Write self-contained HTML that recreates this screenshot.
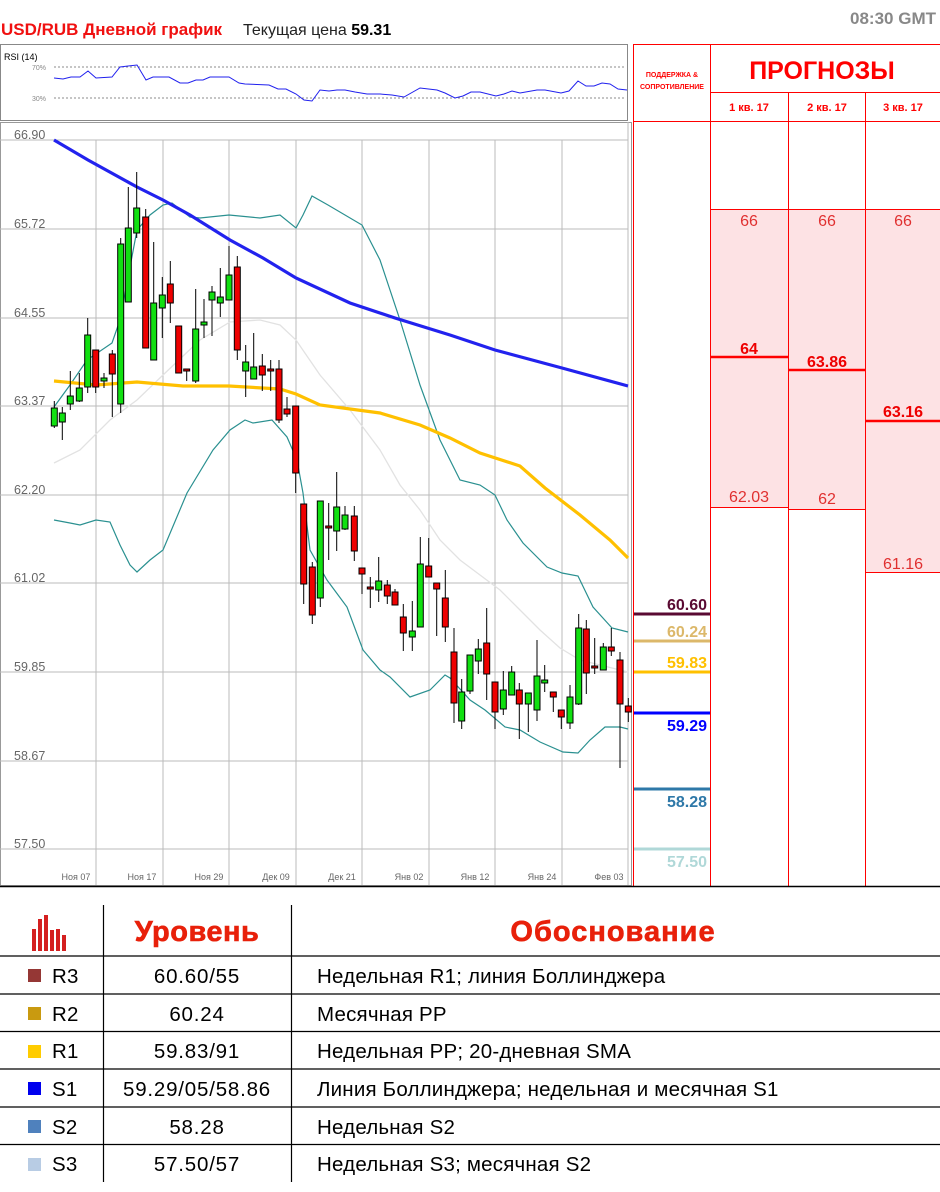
<!DOCTYPE html>
<html><head><meta charset="utf-8"><style>
html,body{margin:0;padding:0;background:#fff;}
svg{display:block;font-family:"Liberation Sans","DejaVu Sans",sans-serif;}
</style></head><body>
<svg width="940" height="1192" viewBox="0 0 940 1192" xmlns="http://www.w3.org/2000/svg">
<rect width="940" height="1192" fill="#fff"/>
<!-- title -->
<text x="1" y="35" font-size="17" font-weight="bold" fill="#f01010">USD/RUB Дневной график</text>
<text x="243" y="35" font-size="16" fill="#222">Текущая цена <tspan font-weight="bold" fill="#000">59.31</tspan></text>
<text x="936" y="24" font-size="17" font-weight="bold" fill="#888" text-anchor="end">08:30 GMT</text>

<!-- RSI box -->
<rect x="0.5" y="44.5" width="627" height="76" fill="#fff" stroke="#888"/>
<text x="4" y="60" font-size="9" fill="#000">RSI (14)</text>
<text x="32" y="70" font-size="7" fill="#888">70%</text>
<text x="32" y="101" font-size="7" fill="#888">30%</text>
<line x1="54" y1="67" x2="626" y2="67" stroke="#666" stroke-dasharray="2,2" stroke-width="0.8"/>
<line x1="54" y1="98" x2="626" y2="98" stroke="#666" stroke-dasharray="2,2" stroke-width="0.8"/>
<polyline fill="none" stroke="#2020ee" stroke-width="1" points="54,78 63,79 71,77 80,77 88,71 96,78 112,77 120,67 137,65 146,80 153,77 169,77 180,83 188,83 196,80 203,80 210,77 229,77 239,83 245,84 269,85 278,89 286,89 296,94 304,100 312,101 320,90 329,91 337,90 345,90 355,92 367,94 380,94 392,95 404,97 420,88 437,90 445,93 455,98 463,96 471,92 480,92 496,96 504,94 512,91 520,93 537,90 545,90 561,93 569,91 578,81 586,86 594,86 602,83 610,84 618,89 627,90"/>

<!-- main chart frame -->
<rect x="0.5" y="122.5" width="631" height="763" fill="#fff" stroke="#999"/>
<g stroke="#bbb" stroke-width="1">
<line x1="0" y1="140" x2="628" y2="140"/><line x1="0" y1="229" x2="628" y2="229"/><line x1="0" y1="318" x2="628" y2="318"/><line x1="0" y1="406" x2="628" y2="406"/><line x1="0" y1="495" x2="628" y2="495"/><line x1="0" y1="583" x2="628" y2="583"/><line x1="0" y1="672" x2="628" y2="672"/><line x1="0" y1="761" x2="628" y2="761"/><line x1="0" y1="849" x2="628" y2="849"/>
<line x1="96" y1="140" x2="96" y2="885"/><line x1="163" y1="140" x2="163" y2="885"/><line x1="229" y1="140" x2="229" y2="885"/><line x1="296" y1="140" x2="296" y2="885"/><line x1="362" y1="140" x2="362" y2="885"/><line x1="429" y1="140" x2="429" y2="885"/><line x1="495" y1="140" x2="495" y2="885"/><line x1="562" y1="140" x2="562" y2="885"/><line x1="628" y1="122" x2="628" y2="885"/>
</g>
<g font-size="12.5" fill="#666">
<text x="14" y="139">66.90</text><text x="14" y="228">65.72</text><text x="14" y="317">64.55</text><text x="14" y="405">63.37</text><text x="14" y="494">62.20</text><text x="14" y="582">61.02</text><text x="14" y="671">59.85</text><text x="14" y="760">58.67</text><text x="14" y="848">57.50</text>
</g>
<g font-size="9" fill="#666" text-anchor="middle">
<text x="76" y="880">Ноя 07</text><text x="142" y="880">Ноя 17</text><text x="209" y="880">Ноя 29</text><text x="276" y="880">Дек 09</text><text x="342" y="880">Дек 21</text><text x="409" y="880">Янв 02</text><text x="475" y="880">Янв 12</text><text x="542" y="880">Янв 24</text><text x="609" y="880">Фев 03</text>
</g>

<polyline fill="none" stroke="#e2e2e2" stroke-width="1.3" points="54,463 80,450 110,420 137,400 163,375 200,340 230,322 260,320 280,325 296,340 320,375 350,410 380,450 400,485 420,510 440,540 460,560 480,575 500,590 520,610 540,630 560,648 580,660 600,665 628,672"/>
<polyline fill="none" stroke="#2a9090" stroke-width="1.2" points="54,407 70,385 87,360 112,343 120,320 137,230 150,215 163,205 172,203 190,217 200,218 229,215 260,218 280,215 296,228 303,215 312,196 328,205 362,225 380,260 400,320 420,385 440,440 460,480 480,485 495,495 507,520 523,543 547,567 562,573 578,576 593,607 612,628 628,632"/>
<polyline fill="none" stroke="#2a9090" stroke-width="1.2" points="54,520 70,523 80,525 96,520 110,522 120,545 130,565 137,572 150,560 163,550 187,493 213,450 230,430 245,420 253,423 272,420 287,437 297,460 303,493 310,550 327,580 347,607 363,650 380,670 390,677 410,697 430,690 445,675 450,678 470,700 485,710 505,727 520,730 540,742 563,752 578,753 590,740 605,727 620,727 628,729"/>
<polyline fill="none" stroke="#2222ee" stroke-width="3.2" points="54,140 88,160 137,187 163,200 190,215 230,240 263,258 296,278 350,303 395,318 450,335 495,350 562,368 628,386"/>
<polyline fill="none" stroke="#ffc000" stroke-width="3.2" points="54,381 96,385 137,382 183,386 229,386 280,389 296,394 320,405 380,413 420,425 450,438 480,453 520,466 545,488 580,515 610,540 628,558"/>

<g stroke="#000" stroke-width="1">
<path d="M54.3 401V428M62.3 407V440M70.3 371V410M79.3 373V402M87.7 318V393M95.7 350V393M104 373V388M112.3 350V417M120.7 238V413M128.3 187V302M136.7 172V238M145.7 209V348M153.7 242V360M162.3 277V338M170.3 261V323M178.7 326V373M186.7 369V381M195.7 289V383M204 299V338M212 286V336M220.3 268V317M229 246V300M237.3 256V360M245.7 345V397M253.7 333V379M262.3 354V391M270.7 360V391M279 360V423M287 397V417M295.7 406V493M303.7 504V604M312.3 562V624M320.3 501V607M328.7 503V560M336.7 472V551M345 506V530M354.3 506V561M362 568V594M370.3 577V608M378.7 557V602M387.3 580V604M395 589V605M403.3 604V651M412.3 601V651M420.3 537V627M428.7 538V577M436.7 583V636M445.3 570V642M454 628V723M461.7 679V729M470 655V694M478.3 639V674M486.7 608V700M495 682V729M503.3 671V715M511.7 666V695M519.3 683V739M528.3 693V732M537 640V721M544.7 665V692M553.3 692V712M561.3 710V729M570 685V729M578.7 614V705M586.3 620V694M594.7 638V674M603.3 643V670M611.3 628V656M620 652V768M628.3 698V722"/>
<g fill="#11e011">
<rect x="51.3" y="408" width="6" height="18"/><rect x="59.3" y="413" width="6" height="9"/><rect x="67.3" y="396" width="6" height="8"/><rect x="76.3" y="388" width="6" height="13"/><rect x="84.7" y="335" width="6" height="52"/><rect x="101" y="378" width="6" height="3"/><rect x="117.7" y="244" width="6" height="160"/><rect x="125.3" y="228" width="6" height="74"/><rect x="133.7" y="208" width="6" height="25"/><rect x="150.7" y="303" width="6" height="57"/><rect x="159.3" y="295" width="6" height="13"/><rect x="192.7" y="329" width="6" height="52"/><rect x="201" y="322" width="6" height="3"/><rect x="209" y="292" width="6" height="8"/><rect x="217.3" y="297" width="6" height="6"/><rect x="226" y="275" width="6" height="25"/><rect x="242.7" y="362" width="6" height="9"/><rect x="250.7" y="367" width="6" height="12"/><rect x="317.3" y="501" width="6" height="97"/><rect x="333.7" y="507" width="6" height="24"/><rect x="342" y="515" width="6" height="14"/><rect x="375.7" y="581" width="6" height="9"/><rect x="409.3" y="631" width="6" height="6"/><rect x="417.3" y="564" width="6" height="63"/><rect x="458.7" y="692" width="6" height="29"/><rect x="467" y="655" width="6" height="36"/><rect x="475.3" y="649" width="6" height="12"/><rect x="500.3" y="690" width="6" height="19"/><rect x="508.7" y="672" width="6" height="23"/><rect x="525.3" y="693" width="6" height="11"/><rect x="534" y="676" width="6" height="34"/><rect x="541.7" y="680" width="6" height="3"/><rect x="567" y="697" width="6" height="26"/><rect x="575.7" y="628" width="6" height="76"/><rect x="600.3" y="647" width="6" height="23"/>
</g>
<g fill="#ee0000">
<rect x="92.7" y="350" width="6" height="37"/><rect x="109.3" y="354" width="6" height="20"/><rect x="142.7" y="217" width="6" height="131"/><rect x="167.3" y="284" width="6" height="19"/><rect x="175.7" y="326" width="6" height="47"/><rect x="183.7" y="369" width="6" height="2"/><rect x="234.3" y="267" width="6" height="83"/><rect x="259.3" y="366" width="6" height="9"/><rect x="267.7" y="369" width="6" height="2"/><rect x="276" y="369" width="6" height="51"/><rect x="284" y="409" width="6" height="5"/><rect x="292.7" y="406" width="6" height="67"/><rect x="300.7" y="504" width="6" height="80"/><rect x="309.3" y="567" width="6" height="48"/><rect x="325.7" y="526" width="6" height="2"/><rect x="351.3" y="516" width="6" height="35"/><rect x="359" y="568" width="6" height="6"/><rect x="367.3" y="587" width="6" height="2"/><rect x="384.3" y="585" width="6" height="11"/><rect x="392" y="592" width="6" height="13"/><rect x="400.3" y="617" width="6" height="16"/><rect x="425.7" y="566" width="6" height="11"/><rect x="433.7" y="583" width="6" height="6"/><rect x="442.3" y="598" width="6" height="29"/><rect x="451" y="652" width="6" height="51"/><rect x="483.7" y="643" width="6" height="31"/><rect x="492" y="682" width="6" height="30"/><rect x="516.3" y="690" width="6" height="14"/><rect x="550.3" y="692" width="6" height="5"/><rect x="558.3" y="710" width="6" height="7"/><rect x="583.3" y="629" width="6" height="44"/><rect x="591.7" y="666" width="6" height="2"/><rect x="608.3" y="647" width="6" height="4"/><rect x="617" y="660" width="6" height="44"/><rect x="625.3" y="706" width="6" height="6"/>
</g>
</g>

<!-- right table -->
<rect x="866" y="209" width="74" height="363" fill="#fde2e4"/>
<rect x="711" y="209" width="77" height="298" fill="#fde2e4"/>
<rect x="789" y="209" width="76" height="300" fill="#fde2e4"/>
<g stroke="#ff0000" stroke-width="1">
<line x1="633.5" y1="44" x2="633.5" y2="886"/><line x1="710.5" y1="44" x2="710.5" y2="886"/><line x1="788.5" y1="92" x2="788.5" y2="886"/><line x1="865.5" y1="92" x2="865.5" y2="886"/>
<line x1="633" y1="44.5" x2="940" y2="44.5"/><line x1="710" y1="92.5" x2="940" y2="92.5"/><line x1="633" y1="121.5" x2="940" y2="121.5"/>
<line x1="711" y1="209.5" x2="940" y2="209.5"/><line x1="711" y1="507.5" x2="788" y2="507.5"/><line x1="789" y1="509.5" x2="865" y2="509.5"/><line x1="866" y1="572.5" x2="940" y2="572.5"/>
</g>
<g stroke="#ff0000" stroke-width="2.5">
<line x1="711" y1="357" x2="788" y2="357"/><line x1="789" y1="370" x2="865" y2="370"/><line x1="866" y1="421" x2="940" y2="421"/>
</g>
<text x="672" y="77" font-size="7" font-weight="bold" fill="#ff0000" text-anchor="middle">ПОДДЕРЖКА &amp;</text>
<text x="672" y="89" font-size="7" font-weight="bold" fill="#ff0000" text-anchor="middle">СОПРОТИВЛЕНИЕ</text>
<text x="822" y="79" font-size="25" font-weight="bold" fill="#ff0000" text-anchor="middle">ПРОГНОЗЫ</text>
<g font-size="11" font-weight="bold" fill="#ff0000" text-anchor="middle">
<text x="749" y="111">1 кв. 17</text><text x="827" y="111">2 кв. 17</text><text x="903" y="111">3 кв. 17</text>
</g>
<g font-size="16" fill="#e03030" text-anchor="middle">
<text x="749" y="226">66</text><text x="827" y="226">66</text><text x="903" y="226">66</text>
<text x="749" y="502">62.03</text><text x="827" y="504">62</text><text x="903" y="569">61.16</text>
</g>
<g font-size="16" font-weight="bold" fill="#ee0000" text-anchor="middle">
<text x="749" y="354">64</text><text x="827" y="367">63.86</text><text x="903" y="417">63.16</text>
</g>
<line x1="634" y1="614" x2="710" y2="614" stroke="#5a0a32" stroke-width="3"/>
<line x1="634" y1="641" x2="710" y2="641" stroke="#dcb86a" stroke-width="3"/>
<line x1="634" y1="672" x2="710" y2="672" stroke="#ffc000" stroke-width="3"/>
<line x1="634" y1="713" x2="710" y2="713" stroke="#0000ff" stroke-width="3"/>
<line x1="634" y1="789" x2="710" y2="789" stroke="#2e78a8" stroke-width="3"/>
<line x1="634" y1="849" x2="710" y2="849" stroke="#b0d8d8" stroke-width="3"/>
<g font-size="16" font-weight="bold" text-anchor="end">
<text x="707" y="610" fill="#5a0a32">60.60</text>
<text x="707" y="637" fill="#dcb86a">60.24</text>
<text x="707" y="668" fill="#ffc000">59.83</text>
<text x="707" y="731" fill="#0000ff">59.29</text>
<text x="707" y="807" fill="#2e78a8">58.28</text>
<text x="707" y="867" fill="#b0d8d8">57.50</text>
</g>
<line x1="0" y1="886.5" x2="940" y2="886.5" stroke="#000" stroke-width="1.5"/>

<!-- bottom table -->
<g stroke="#000" stroke-width="1.2">
<line x1="103.5" y1="905" x2="103.5" y2="1182"/><line x1="291.5" y1="905" x2="291.5" y2="1182"/>
<line x1="0" y1="956" x2="940" y2="956"/><line x1="0" y1="994" x2="940" y2="994"/><line x1="0" y1="1031.5" x2="940" y2="1031.5"/><line x1="0" y1="1069" x2="940" y2="1069"/><line x1="0" y1="1107" x2="940" y2="1107"/><line x1="0" y1="1144.5" x2="940" y2="1144.5"/>
</g>
<g fill="#d42020">
<rect x="32" y="929" width="4" height="22"/><rect x="38" y="919" width="4" height="32"/><rect x="44" y="915" width="4" height="36"/><rect x="50" y="930" width="4" height="21"/><rect x="56" y="929" width="4" height="22"/><rect x="62" y="935" width="4" height="16"/>
</g>
<text x="197" y="941" font-size="29" font-weight="bold" fill="#e8200a" text-anchor="middle" stroke="#e8200a" stroke-width="0.6" letter-spacing="0.5">Уровень</text>
<text x="613" y="941" font-size="29" font-weight="bold" fill="#e8200a" text-anchor="middle" stroke="#e8200a" stroke-width="0.6" letter-spacing="1">Обоснование</text>
<rect x="28" y="969" width="13" height="13" fill="#953735"/>
<rect x="28" y="1007" width="13" height="13" fill="#c99a10"/>
<rect x="28" y="1045" width="13" height="13" fill="#ffcc00"/>
<rect x="28" y="1082" width="13" height="13" fill="#0000ee"/>
<rect x="28" y="1120" width="13" height="13" fill="#4f81bd"/>
<rect x="28" y="1158" width="13" height="13" fill="#b8cce4"/>
<g font-size="20.5" fill="#000" letter-spacing="0.2">
<text x="52" y="983">R3</text><text x="52" y="1021">R2</text><text x="52" y="1058">R1</text><text x="52" y="1096">S1</text><text x="52" y="1134">S2</text><text x="52" y="1171">S3</text>
<g text-anchor="middle" letter-spacing="0.8">
<text x="197" y="983">60.60/55</text><text x="197" y="1021">60.24</text><text x="197" y="1058">59.83/91</text><text x="197" y="1096">59.29/05/58.86</text><text x="197" y="1134">58.28</text><text x="197" y="1171">57.50/57</text>
</g>
<text x="317" y="983">Недельная R1; линия Боллинджера</text>
<text x="317" y="1021">Месячная PP</text>
<text x="317" y="1058">Недельная PP; 20-дневная SMA</text>
<text x="317" y="1096">Линия Боллинджера; недельная и месячная S1</text>
<text x="317" y="1134">Недельная S2</text>
<text x="317" y="1171">Недельная S3; месячная S2</text>
</g>
</svg>
</body></html>
